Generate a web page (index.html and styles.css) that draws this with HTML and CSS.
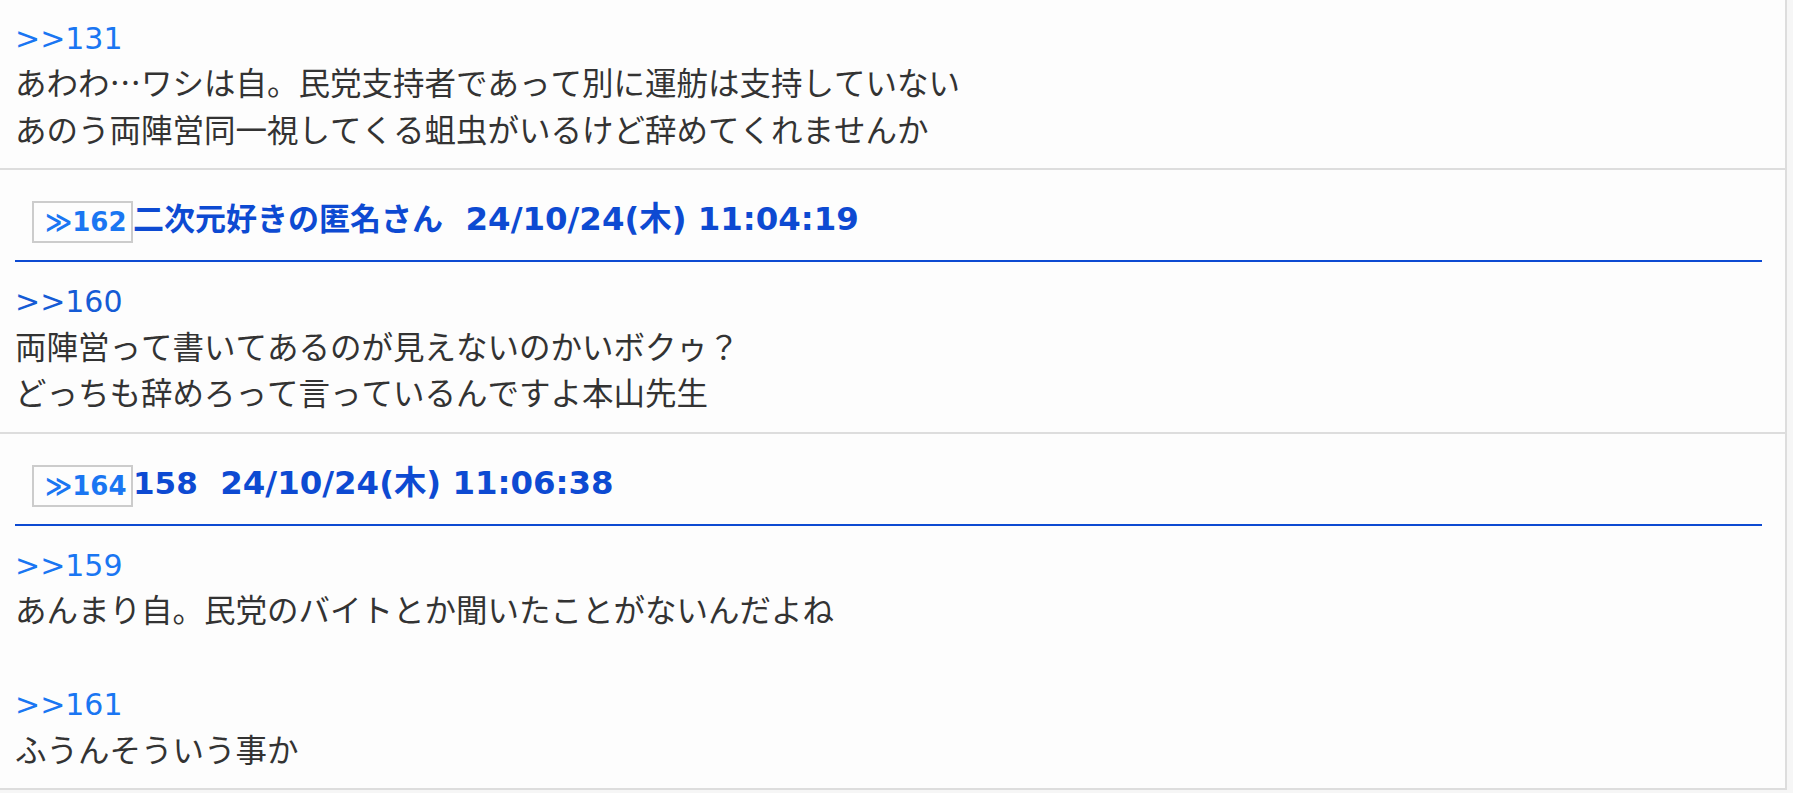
FILE: index.html
```html
<!DOCTYPE html>
<html lang="ja">
<head>
<meta charset="utf-8">
<title>スレッド</title>
<link rel="stylesheet" href="styles.css">
</head>
<body>
<div class="thread">
  <div class="post post-partial">
    <div class="post-body">
      <a class="anchor">&gt;&gt;131</a><br>
      あわわ…ワシは自。民党支持者であって別に運舫は支持していない<br>
      あのう両陣営同一視してくる蛆虫がいるけど辞めてくれませんか
    </div>
  </div>
  <div class="post">
    <div class="post-head">
      <span class="res-no">≫162</span><span class="res-meta"><span class="res-name">二次元好きの匿名さん</span><span class="res-date">&nbsp;&nbsp;24/10/24(木) 11:04:19</span></span>
    </div>
    <div class="post-body">
      <a class="anchor visited">&gt;&gt;160</a><br>
      両陣営って書いてあるのが見えないのかいボクゥ？<br>
      どっちも辞めろって言っているんですよ本山先生
    </div>
  </div>
  <div class="post">
    <div class="post-head">
      <span class="res-no">≫164</span><span class="res-meta"><span class="res-name">158</span><span class="res-date">&nbsp;&nbsp;24/10/24(木) 11:06:38</span></span>
    </div>
    <div class="post-body">
      <a class="anchor">&gt;&gt;159</a><br>
      あんまり自。民党のバイトとか聞いたことがないんだよね<br>
      <br>
      <a class="anchor">&gt;&gt;161</a><br>
      ふうんそういう事か
    </div>
  </div>
</div>
</body>
</html>
```
FILE: styles.css
```css
html, body {
  margin: 0;
  padding: 0;
}
body {
  background: #f6f6f6;
  font-family: "Noto Sans CJK JP", sans-serif;
  color: #333333;
}
.thread {
  width: 1785px;
  border-right: 2px solid #dddddd;
  background: #fdfdfd;
}
.post {
  border-bottom: 2px solid #dddddd;
}
.post-head {
  display: flex;
  align-items: center;
  margin: 0 23px 0 15px;
  padding: 31px 0 17px 17px;
  border-bottom: 2px solid #0d4ad2;
  font-weight: 700;
}
.res-no {
  box-sizing: border-box;
  display: inline-flex;
  align-items: center;
  width: 101px;
  height: 42px;
  padding: 0 0 0 11px;
  border: 2px solid #cccccc;
  color: #1a76f2;
  font-family: "DejaVu Sans", "Noto Sans CJK JP", sans-serif;
  font-size: 26px;
  line-height: 1;
}
.res-meta {
  margin-left: 0;
  margin-top: -6px;
  color: #0d4ad2;
  font-family: "DejaVu Sans", "Noto Sans CJK JP", sans-serif;
  font-size: 31px;
  line-height: 42px;
}
.res-date {
  font-size: 32.4px;
}
.post-body {
  padding: 13px 15px 17px 15px;
  font-size: 31.5px;
  font-kerning: none;
  line-height: 46.5px;
}
.post-partial .post-body {
  padding-top: 11.5px;
}
.anchor {
  color: #1a76f2;
  text-decoration: none;
  font-family: "DejaVu Sans", "Noto Sans CJK JP", sans-serif;
  font-size: 30px;
  line-height: 1;
}
.anchor.visited {
  color: #155bd5;
}
```
